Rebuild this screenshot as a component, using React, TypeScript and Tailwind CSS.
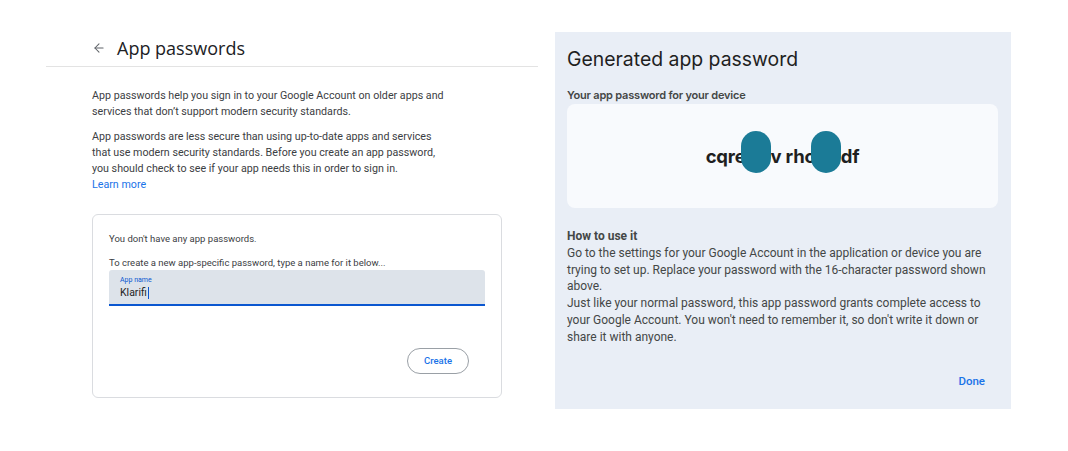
import { ArrowLeft } from "lucide-react";

function Blob() {
  return (
    <span className="relative inline-block h-[1em] w-[25px] align-baseline">
      <span className="absolute left-[-5px] top-[-13px] h-[42px] w-[30px] rounded-full bg-[#1b7b97]" />
    </span>
  );
}

export default function App() {
  return (
    <div className="flex h-[451px] w-[1068px] bg-white font-['Roboto',sans-serif]">
      {/* left: app passwords page */}
      <div className="ml-[46px] w-[492px] pt-[36px]">
        <div className="flex h-[24px] items-center pl-[46px]">
          <ArrowLeft className="h-[14px] w-[14px] text-[#5f6368]" strokeWidth={1.8} />
          <h1 className="ml-[11px] font-['Open_Sans',sans-serif] text-[18px] leading-[24px] text-[#202124]">
            App passwords
          </h1>
        </div>
        <div className="mt-[6px] border-t border-[#e3e3e3]" />
        <div className="pl-[46px] pt-[21px] text-[10.7px] leading-[16px] text-[#3c4043]">
          <p className="w-[356px]">
            App passwords help you sign in to your Google Account on older apps and services that don’t support modern security standards.
          </p>
          <p className="mt-[9px] w-[356px]">
            App passwords are less secure than using up-to-date apps and services that use modern security standards. Before you create an app password, you should check to see if your app needs this in order to sign in.
          </p>
          <a className="block text-[#1a73e8]">Learn more</a>

          <div className="mt-[21px] flex h-[184px] w-[410px] flex-col rounded-[6px] border border-[#dadce0] px-[16px] pt-[17px] text-[9.5px] leading-[14px] text-[#3c4043]">
            <p>You don't have any app passwords.</p>
            <p className="mt-[10px]">To create a new app-specific password, type a name for it below...</p>
            <div className="h-[36px] rounded-t-[3px] border-b-2 border-[#0b57d0] bg-[#dde3ea] pl-[11px] pt-[6px]">
              <div className="text-[7px] leading-[9px] text-[#0b57d0]">App name</div>
              <div className="mt-[1px] flex items-center text-[10.5px] leading-[14px] text-[#1f1f1f]">
                Klarifi<span className="ml-[1px] h-[12px] w-[1px] bg-[#0b57d0]" />
              </div>
            </div>
            <div className="mt-auto mb-[23px] flex justify-end pr-[16px]">
              <button className="h-[26px] w-[62px] rounded-full border border-[#9aa0a6] text-[9.5px] font-medium text-[#1a73e8]">
                Create
              </button>
            </div>
          </div>
        </div>
      </div>

      {/* right: generated app password dialog */}
      <div className="ml-[17px] mt-[32px] flex h-[377px] w-[456px] flex-col bg-[#e9eef6] pl-[12px] pr-[13px] pt-[14px]">
        <h2 className="font-['Inter',sans-serif] text-[19.4px] leading-[26px] text-[#1f1f1f]">Generated app password</h2>
        <p className="mt-[16px] font-['Inter',sans-serif] text-[11px] font-semibold leading-[14px] tracking-[-0.2px] text-[#444746]">
          Your app password for your device
        </p>
        <div className="mt-[2px] flex h-[104px] items-center justify-center rounded-[8px] bg-[#f8fafd] pb-[2px]">
          <span className="font-['Inter',sans-serif] text-[18.5px] font-bold leading-[20px] tracking-[-0.2px] text-[#1f1f1f]">
            cqre<Blob />v rho<Blob />df
          </span>
        </div>
        <div className="mt-[20px] font-['Roboto',sans-serif] text-[12px] leading-[16.8px] text-[#444746]">
          <p className="font-bold">How to use it</p>
          <p>
            Go to the settings for your Google Account in the application or device you are trying to set up. Replace your password with the 16-character password shown above.
          </p>
          <p>
            Just like your normal password, this app password grants complete access to your Google Account. You won't need to remember it, so don't write it down or share it with anyone.
          </p>
        </div>
        <div className="mt-auto mb-[19px] flex justify-end pr-[13px]">
          <button className="text-[11.5px] font-medium text-[#1a73e8]">Done</button>
        </div>
      </div>
    </div>
  );
}
